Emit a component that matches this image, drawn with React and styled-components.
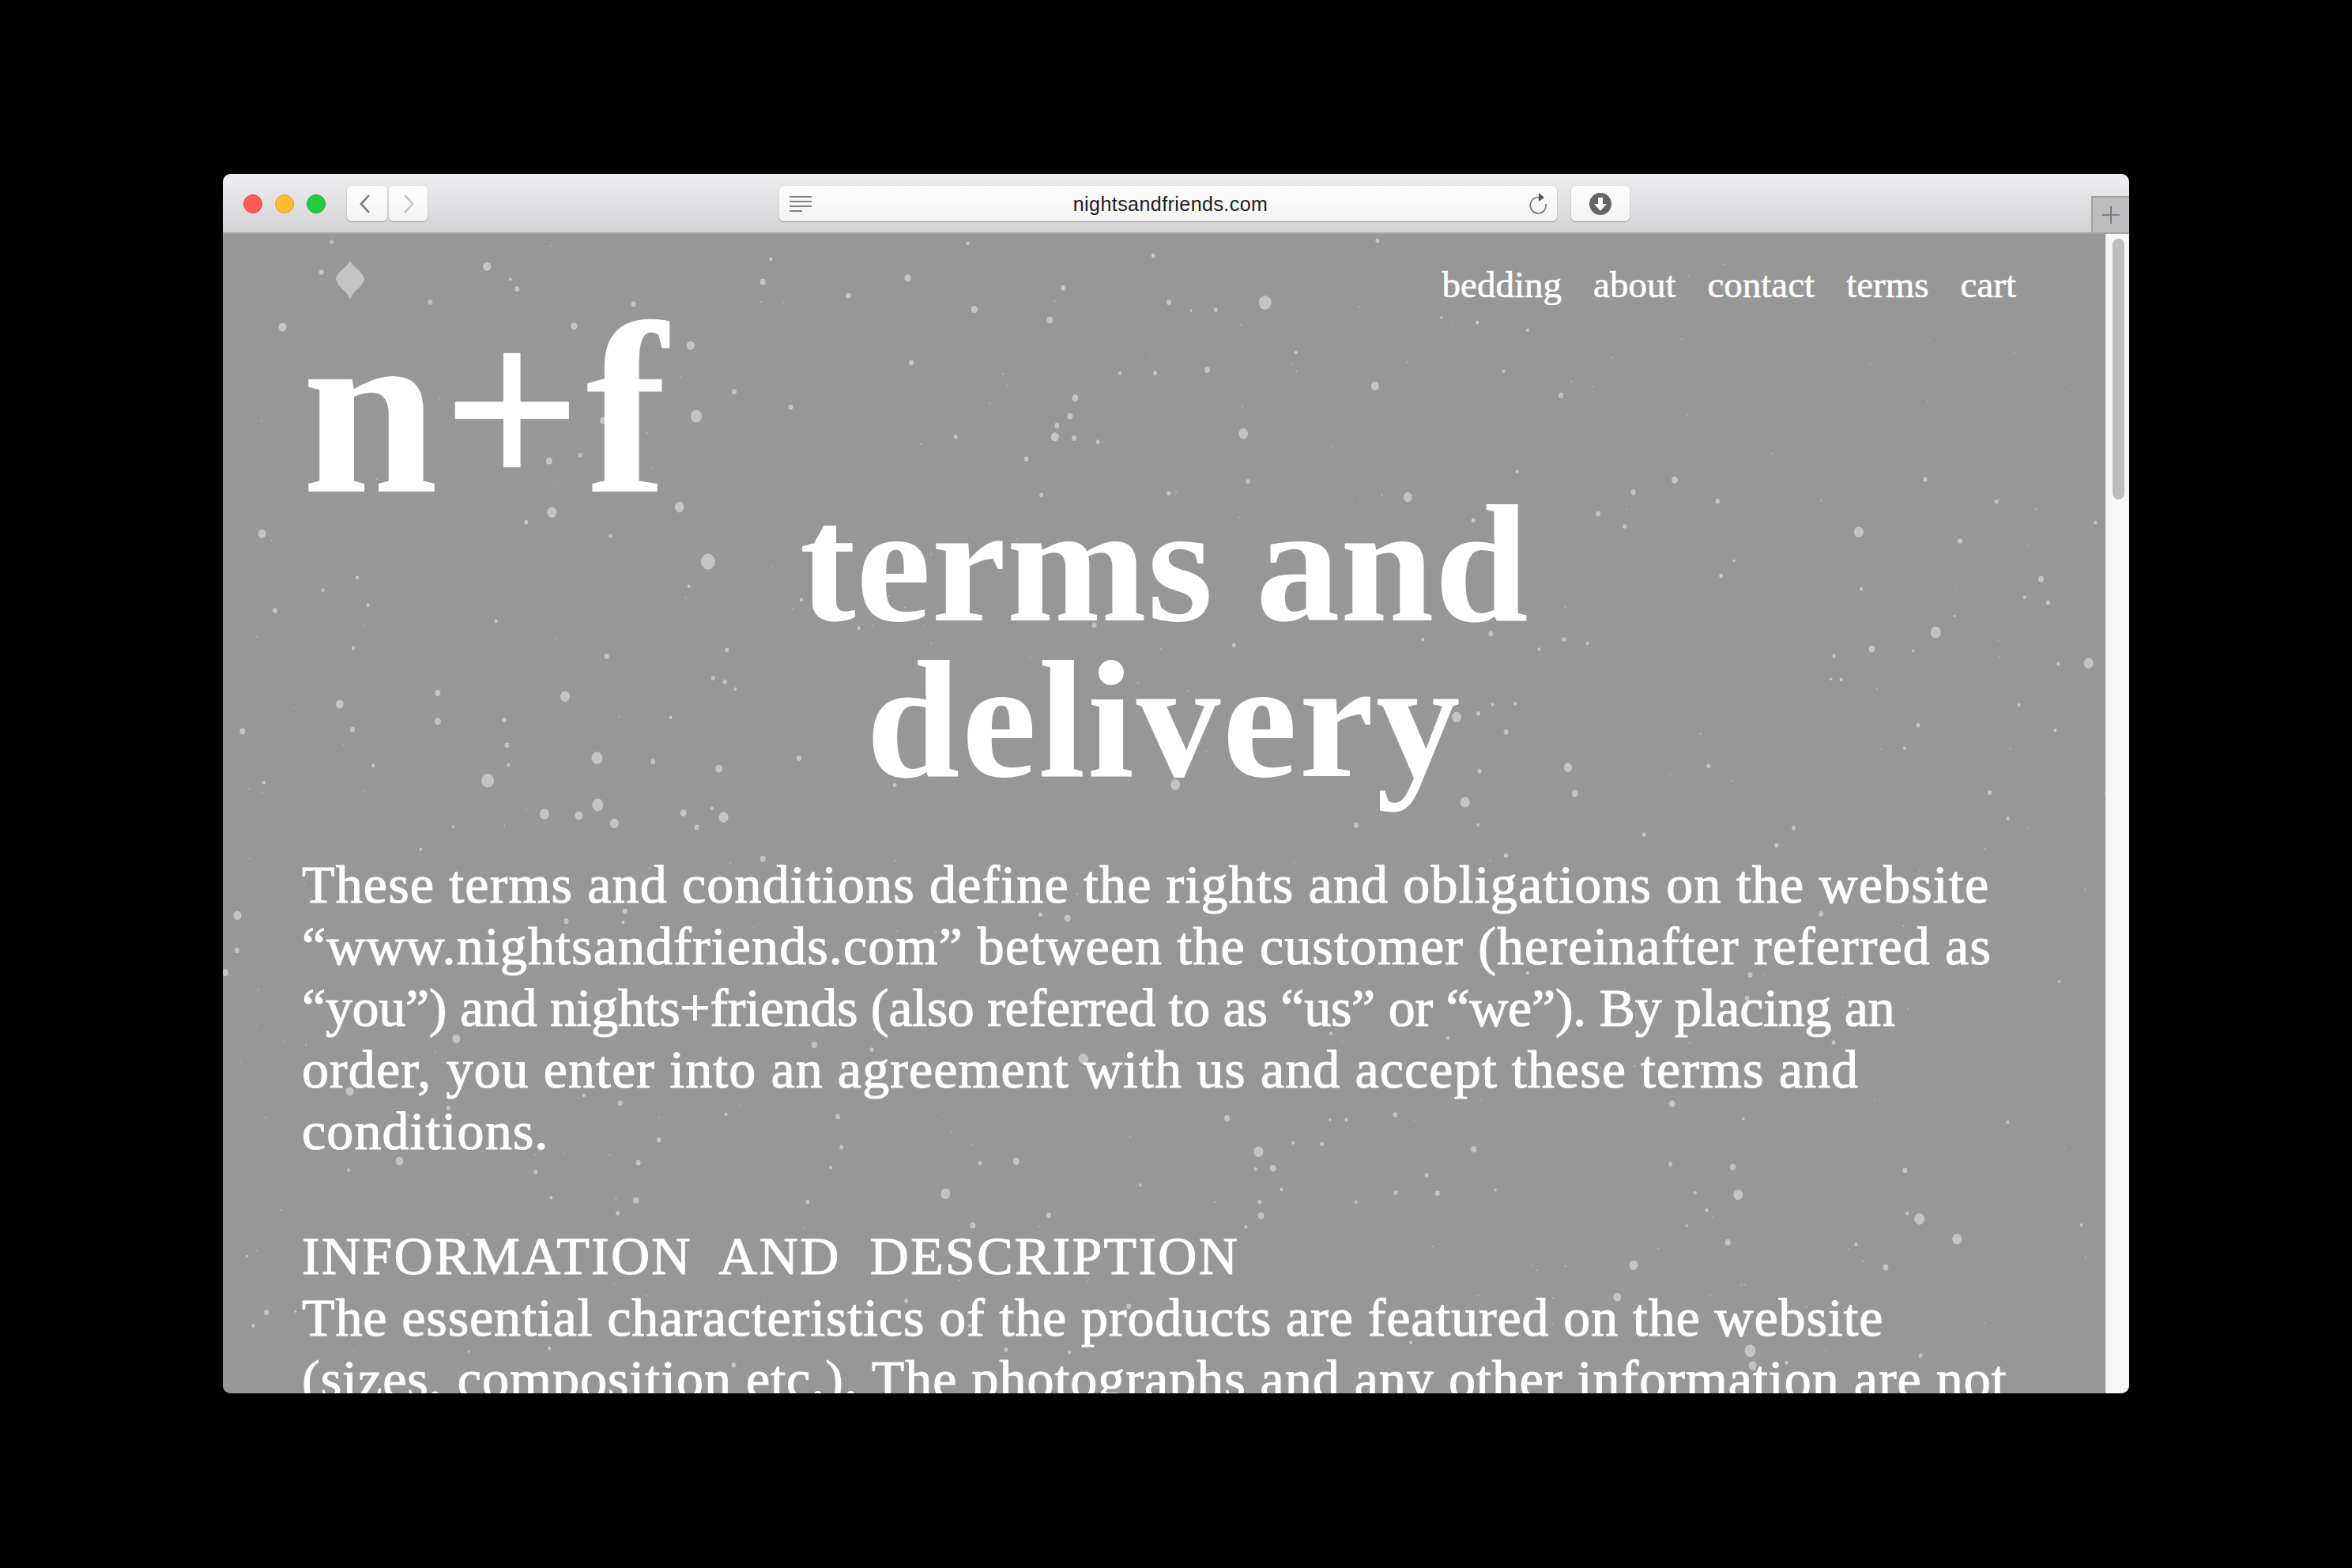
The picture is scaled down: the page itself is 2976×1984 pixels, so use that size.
import React from 'react';
import styled, { createGlobalStyle } from 'styled-components';

const GlobalStyle = createGlobalStyle`
  html, body {
    margin: 0;
    background: #000;
  }
`;

const Page = styled.div`
  width: 2976px;
  height: 1984px;
  padding: 220px 282px;
  box-sizing: border-box;
  background: #000;
  overflow: hidden;
`;

const Browser = styled.div`
  width: 2412px;
  height: 1543px;
  border-radius: 10px;
  overflow: hidden;
  display: flex;
  flex-direction: column;
  background: #979797;
`;

const Toolbar = styled.header`
  position: relative;
  height: 76px;
  flex: none;
  box-sizing: border-box;
  padding: 15px 0 0 26px;
  display: flex;
  align-items: flex-start;
  background: linear-gradient(#eeedef, #d3d2d4);
  border-bottom: 2px solid #a6a6a6;
`;

const Lights = styled.div`
  display: flex;
  gap: 16px;
  margin: 11px 0 0;
`;

const Light = styled.span`
  width: 24px;
  height: 24px;
  border-radius: 50%;
  box-sizing: border-box;
  background: ${p => p.$color};
  border: 1px solid ${p => p.$edge};
`;

const ToolButton = styled.div`
  width: ${p => p.$w}px;
  height: 45px;
  margin-left: ${p => p.$ml}px;
  flex: none;
  display: flex;
  align-items: center;
  justify-content: center;
  background: linear-gradient(#fdfdfd, #f3f3f3);
  border-radius: 6px;
  box-shadow: 0 1px 1px rgba(0, 0, 0, 0.28), 0 0 0 1px rgba(0, 0, 0, 0.04);
`;

const BackIcon = styled.svg`
  margin-right: 6px;
`;

const AddressBar = styled.div`
  width: 984px;
  height: 45px;
  margin-left: 445px;
  flex: none;
  box-sizing: border-box;
  padding: 0 12px 0 12px;
  display: flex;
  align-items: center;
  justify-content: space-between;
  background: linear-gradient(#fdfdfd, #f3f3f3);
  border-radius: 6px;
  box-shadow: 0 1px 1px rgba(0, 0, 0, 0.28), 0 0 0 1px rgba(0, 0, 0, 0.04);
`;

const Url = styled.span`
  font: 25px "Liberation Sans", Arial, sans-serif;
  letter-spacing: 0.45px;
  color: #1c1c1c;
  padding-top: 2px;
`;

const NewTab = styled.div`
  position: absolute;
  right: 0;
  bottom: 0;
  width: 48px;
  height: 46px;
  box-sizing: border-box;
  display: flex;
  align-items: center;
  justify-content: center;
  background: #bdbcbe;
  border: 2px solid #a0a0a0;
  border-right: 0;
  border-bottom: 0;
`;

const Viewport = styled.div`
  flex: 1;
  min-height: 0;
  display: flex;
`;

const Content = styled.main`
  position: relative;
  flex: 1;
  min-width: 0;
  overflow: hidden;
  background: #979797;
  color: #fff;
  font-family: "Liberation Serif", "Times New Roman", serif;
`;

const Speckles = styled.svg`
  position: absolute;
  left: 0;
  top: 0;
`;

const Inner = styled.div`
  position: relative;
  padding: 0 100px;
`;

const Nav = styled.nav`
  display: flex;
  justify-content: flex-end;
  gap: 40px;
  padding: 34px 13px 0 0;
  font-size: 47px;
  line-height: 60px;
  -webkit-text-stroke: 0.6px #fff;
`;

const Logo = styled.div`
  font-size: 310px;
  font-weight: 700;
  letter-spacing: 5px;
  line-height: 300px;
  margin-top: -22px;
`;

const Title = styled.h1`
  margin: -53px 0 0;
  font-size: 213px;
  font-weight: 700;
  line-height: 197px;
  text-align: center;
`;

// one set line; the tracking differs a little per line to hold the original measure
const Line = styled.span`
  display: block;
  letter-spacing: ${p => p.$ls}px;
`;

const Body = styled.p`
  margin: 71px 0 0;
  font-size: 68px;
  line-height: 78px;
  -webkit-text-stroke: 1.1px #fff;
  white-space: nowrap;
`;

const Section = styled(Body)`
  margin-top: 80px;
`;

const SectionTitle = styled.span`
  display: block;
  font-size: 68px;
  letter-spacing: 2.3px;
  word-spacing: 18px;
`;

const Scrollbar = styled.aside`
  width: 30px;
  flex: none;
  box-sizing: border-box;
  padding: 6px 6px 0 8px;
  background: #f7f7f7;
  border-left: 1px solid #e4e4e4;
`;

const Thumb = styled.div`
  height: 330px;
  border-radius: 8px;
  background: #bdbdbd;
`;

// flakes read off crops of the page: [crop x, crop y, x scale, y scale, points]
const flakeCrops = [
  [1000, 300, 1.568, 2.24, [
    [352,18,2],[720,52,2.5],[233,116,4],[541,144,3],[116,164,2.5],[751,185,3],[942,186,8],[365,205,4],[515,235,4],
    [844,206,2.5],[795,208,1.5],[1165,10,2.5],[240,356,3],[1160,422,5],[827,376,3.5],[724,385,2.5],[654,386,2],
    [565,456,4],[555,508,3.5],[525,566,5],[563,570,3],[610,580,2.5],[529,534,3],[899,557,6],[328,565,2.5],[468,629,3],
    [1529,449,3],[1415,380,2],[1463,264,2],[1363,242,2],[1292,228,1.5],[1225,737,5.5],[908,692,2.5],[498,731,2.5],
    [751,726,2.5],[1442,665,2],[1355,803,2.5],[603,1100,3],[136,1108,2],[1390,1124,3],[1535,1140,2.5],[1255,1140,2],
    [880,1157,2.5],[1486,1168,2],[1322,1360,6],[1365,1350,2.5],[1420,1403,3],[1393,1325,2],[1438,1322,2],[1543,1504,5],
    [1367,1514,2.5],[17,1477,3],[207,1553,2.5],[764,1552,6],[22,1028,2],[1003,327,2],
  ]],
  [1700, 600, 1.568, 3, [
    [657,22,4],[575,68,3],[505,150,3],[742,102,3],[558,198,2.5],[1154,20,2.5],[1295,105,2.5],[1022,220,6],[1223,253,3],
    [1492,184,2],[775,328,1.5],[749,385,2.5],[1027,435,2],[1384,398,3.5],[1398,488,2.5],[1351,467,2],[1212,538,1.5],
    [1175,600,6.5],[1048,663,4],[973,690,2],[1130,670,1.5],[1478,718,6],[1418,720,2],[987,780,2],[967,778,1.5],[484,642,2],
    [1340,876,2],[1140,953,2.5],[1412,972,2],[1113,1040,2],[724,1108,2.5],[1282,1209,2.5],[1318,1307,2],[893,1343,2.5],
    [596,1368,2.5],[859,1409,2.5],[322,1447,2.5],[241,1245,6],[459,1212,4],[445,1112,5],[25,1333,3],[267,1331,2],
  ]],
  [280, 300, 1.96, 3, [
    [659,112,5],[248,133,3],[518,247,3],[733,197,3],[152,342,5],[875,338,4],[1022,254,3],[1343,170,3.5],[1363,84,2],
    [1555,222,3],[1164,412,5],[1178,680,7],[947,696,4],[1272,587,3],[1412,645,3],[813,850,4],[890,827,2.5],[820,1045,6],
    [1136,1025,6],[101,1126,5],[756,1082,2.5],[965,1135,2],[274,18,2.5],[717,160,2],
  ]],
  [282, 690, 2.178, 3, [
    [1337,62,9],[322,603,5],[592,561,3.5],[592,668,4],[943,574,6],[54,706,3.5],[357,699,3],[144,248,3],[276,170,2],
    [400,227,2],[370,122,2],[359,390,2],[753,288,2],[1058,421,3],[1284,155,2],[1389,397,2.5],[1351,504,2.5],[1383,518,2.5],
    [1412,546,2],[1234,653,2],[775,663,2.5],[783,759,3],[787,833,2],[1031,807,7],[1185,821,3],[1367,848,4.5],[730,893,8],
    [1033,985,7],[886,1020,6],[981,1026,5],[1079,1056,5.5],[1269,1016,4],[1380,1032,6],[1306,1071,3],[1488,1190,3.5],
    [113,900,2],[414,836,2],[545,1154,2],[1348,998,2],[635,1068,1.5],
  ]],
  [282, 1100, 1.307, 2.36, [
    [24,138,5],[23,242,3],[4,308,4],[568,155,3],[1397,146,4],[1352,135,2.5],[662,158,2],[665,125,3],[386,506,5],[978,524,3.5],
    [1073,538,2.5],[1423,565,6],[210,663,5],[657,698,3],[597,675,2],[373,713,2.5],[832,731,2],[1017,738,3],[721,808,3],
    [292,871,5],[687,876,3],[1312,872,4],[1252,878,2.5],[1195,969,6],[208,898,2],[517,904,2.5],[683,988,3.5],[543,980,2],
    [967,993,2.5],[653,1027,2.5],[1366,1033,3],[1240,1063,3.5],[72,1323,3],[50,1363,2],[1130,1288,2.5],[1498,1305,3],
    [540,1430,2],[845,1480,3],[1295,1435,2.5],[1400,1442,2],[407,1440,1.5],[1517,943,2],[1005,890,2],[1023,830,2.5],
    [120,1320,1.5],[40,1155,1.5],[1235,1363,2],[1070,1290,2],
  ]],
  [1480, 1100, 1.307, 2.36, [
    [1077,133,3],[960,315,3],[592,310,2],[1471,335,1.5],[1098,517,2.5],[267,490,2],[460,503,2],[955,385,3],[831,700,4],
    [95,743,3.5],[373,733,3],[292,748,2],[265,748,1.5],[1386,755,2],[949,745,1.5],[147,843,6],[252,820,2.5],[204,817,2],
    [503,836,3.5],[171,893,4],[142,895,2],[828,880,2.5],[931,889,3.5],[1216,899,3],[425,913,2.5],[940,972,6],[443,967,3],
    [374,966,2.5],[539,957,1.5],[185,956,2],[149,993,2.5],[151,1034,4],[1240,1044,6.5],[1302,1104,6],[1220,1028,2],
    [888,1018,2],[869,966,2],[923,1114,3.5],[767,1182,5.5],[1184,1189,3.5],[740,1277,5],[1508,1062,2],[126,1068,2],
    [960,1438,7],[964,1482,5],[1242,1452,2.5],[1020,1473,2],[399,1413,2],[308,993,2],[855,1064,1.5],[1135,1120,2],
  ]],
];

// content starts at 282, 296 on the page
const flakes = flakeCrops.flatMap(([cx, cy, fx, fy, points]) =>
  points.map(([x, y, r]) => [cx + x / fx - 282, cy + y / fy - 296, r])
);

// the very fine dust between the flakes
function dust(count) {
  let seed = 4217;
  const next = () => {
    seed = (seed * 16807) % 2147483647;
    return seed / 2147483647;
  };
  const dots = [];
  for (let i = 0; i < count; i++) {
    dots.push([next() * 2382, next() * 1470, 0.7 + next() * 0.5]);
  }
  return dots;
}

const fineDust = dust(240);

function Flakes() {
  return (
    <Speckles width="2382" height="1470" viewBox="0 0 2382 1470">
      {fineDust.map(([x, y, r], i) => (
        <circle key={i} cx={x} cy={y} r={r} fill="#b8b8b8" />
      ))}
      {flakes.map(([x, y, r], i) => (
        <ellipse key={i} cx={x} cy={y} rx={r} ry={r * 1.12} fill="#c4c4c4" />
      ))}
      <path d="M161 33 C163 42 177 46 179 57 C177 68 164 72 161 83 C158 72 145 68 143 57 C145 46 159 42 161 33 Z" fill="#c4c4c4" />
    </Speckles>
  );
}

export default function App() {
  return (
    <>
      <GlobalStyle />
      <Page>
        <Browser>
          <Toolbar>
            <Lights>
              <Light $color="#fc5b57" $edge="#e2463f" />
              <Light $color="#fdbc2f" $edge="#dfa023" />
              <Light $color="#27c93f" $edge="#1dad2b" />
            </Lights>
            <ToolButton $w={51} $ml={27}>
              <BackIcon width="16" height="26" viewBox="0 0 16 26">
                <path d="M13 2 L3 13 L13 24" fill="none" stroke="#777" strokeWidth="2.6" />
              </BackIcon>
            </ToolButton>
            <ToolButton $w={49} $ml={2}>
              <svg width="16" height="26" viewBox="0 0 16 26">
                <path d="M3 2 L13 13 L3 24" fill="none" stroke="#c4c4c4" strokeWidth="2.6" />
              </svg>
            </ToolButton>
            <AddressBar>
              <svg width="30" height="22" viewBox="0 0 30 22">
                <path d="M1 2 H29 M1 8 H29 M1 14 H29 M1 20 H17" stroke="#808080" strokeWidth="2" />
              </svg>
              <Url>nightsandfriends.com</Url>
              <svg width="24" height="30" viewBox="0 0 24 30">
                <path d="M14 7 A10 10 0 1 0 22 15" fill="none" stroke="#707070" strokeWidth="1.6" />
                <path d="M13 1 L20 7 L13 12 Z" fill="#555" />
              </svg>
            </AddressBar>
            <ToolButton $w={74} $ml={18}>
              <svg width="28" height="28" viewBox="0 0 28 28">
                <circle cx="14" cy="14" r="14" fill="#666" />
                <path d="M11 6 H17 V14 H22 L14 23 L6 14 H11 Z" fill="#fff" />
              </svg>
            </ToolButton>
            <NewTab>
              <svg width="24" height="24" viewBox="0 0 24 24">
                <path d="M12 1 V23 M1 12 H23" stroke="#6f6f6f" strokeWidth="1.6" />
              </svg>
            </NewTab>
          </Toolbar>
          <Viewport>
            <Content>
              <Flakes />
              <Inner>
                <Nav>
                  <span>bedding</span>
                  <span>about</span>
                  <span>contact</span>
                  <span>terms</span>
                  <span>cart</span>
                </Nav>
                <Logo>n+f</Logo>
                <Title>
                  <Line $ls={0.6}>terms and</Line>
                  <Line $ls={2.6}>delivery</Line>
                </Title>
                <Body>
                  <Line $ls={1.15}>These terms and conditions define the rights and obligations on the website</Line>
                  <Line $ls={1.12}>“www.nightsandfriends.com” between the customer (hereinafter referred as</Line>
                  <Line $ls={-0.3}>“you”) and nights+friends (also referred to as “us” or “we”). By placing an</Line>
                  <Line $ls={1.09}>order, you enter into an agreement with us and accept these terms and</Line>
                  <Line $ls={1.1}>conditions.</Line>
                </Body>
                <Section>
                  <SectionTitle>INFORMATION AND DESCRIPTION</SectionTitle>
                  <Line $ls={0.88}>The essential characteristics of the products are featured on the website</Line>
                  <Line $ls={1}>(sizes, composition etc.). The photographs and any other information are not</Line>
                </Section>
              </Inner>
            </Content>
            <Scrollbar>
              <Thumb />
            </Scrollbar>
          </Viewport>
        </Browser>
      </Page>
    </>
  );
}
